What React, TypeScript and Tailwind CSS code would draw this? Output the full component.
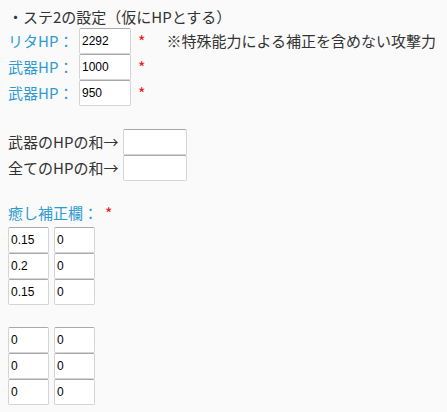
import React from 'react';

const font = { fontFamily: '"Noto Sans CJK JP", "Noto Sans", sans-serif' };

const Box: React.FC<{ value?: string; w: string }> = ({ value, w }) => (
  <div
    className={`${w} h-[26px] bg-white border border-[#d4d4d8] border-t-[#a9a9ad] rounded-[2px] flex items-center px-[2px] text-[12px] text-black font-['Liberation_Sans',sans-serif]`}
  >
    {value}
  </div>
);

const Star = () => <span className="text-[#f01818] text-[16px] leading-none ml-[7px]">*</span>;

const HpRow: React.FC<{ label: string; value: string; note?: string }> = ({ label, value, note }) => (
  <div className="flex items-center h-[26px]">
    <span className="w-[71px] text-[#2e9bd0]">{label}</span>
    <Box value={value} w="w-[52px]" />
    <Star />
    {note && <span className="ml-[21px] text-[#333]">{note}</span>}
  </div>
);

const SumRow: React.FC<{ label: string }> = ({ label }) => (
  <div className="flex items-center h-[26px]">
    <span className="w-[115px] text-[#333]">{label}</span>
    <Box w="w-[64px]" />
  </div>
);

const Grid: React.FC<{ rows: [string, string][] }> = ({ rows }) => (
  <div className="flex flex-col">
    {rows.map((r, i) => (
      <div key={i} className="flex gap-[5px]">
        <Box value={r[0]} w="w-[41px]" />
        <Box value={r[1]} w="w-[41px]" />
      </div>
    ))}
  </div>
);

export default function App() {
  return (
    <div className="w-[447px] h-[412px] bg-[#fafafa] px-2 pt-[6px] text-[15px] text-[#333] leading-[22px]" style={font}>
      <div className="h-[22px]">・ステ2の設定（仮にHPとする）</div>
      <HpRow label="リタHP：" value="2292" note="※特殊能力による補正を含めない攻撃力" />
      <HpRow label="武器HP：" value="1000" />
      <HpRow label="武器HP：" value="950" />
      <div className="mt-[23px]">
        <SumRow label="武器のHPの和→" />
        <SumRow label="全てのHPの和→" />
      </div>
      <div className="mt-[21px] h-[22px] flex items-center">
        <span className="text-[#2e9bd0]">癒し補正欄：</span>
        <Star />
      </div>
      <div className="mt-[3px]">
        <Grid rows={[['0.15', '0'], ['0.2', '0'], ['0.15', '0']]} />
      </div>
      <div className="mt-[22px]">
        <Grid rows={[['0', '0'], ['0', '0'], ['0', '0']]} />
      </div>
    </div>
  );
}
